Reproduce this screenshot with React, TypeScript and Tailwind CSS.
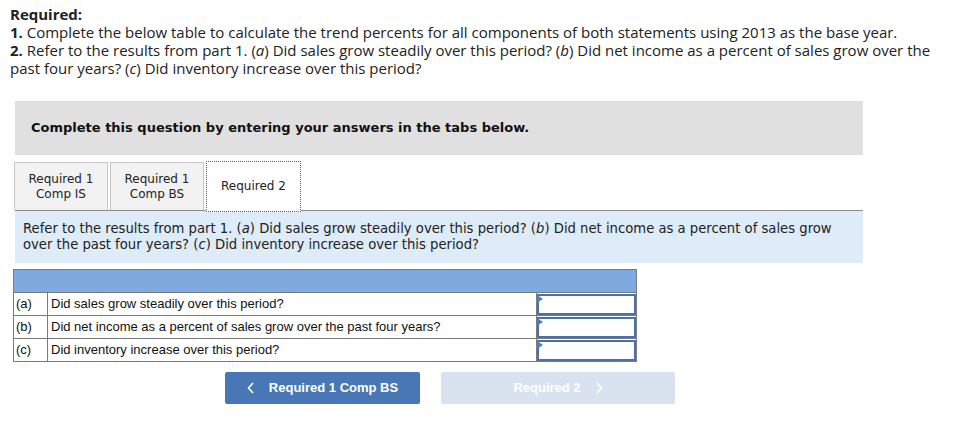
// Required 2 tab — trend percents question (read-only reproduction)

const verdana = { fontFamily: '"DejaVu Sans", Verdana, sans-serif' }
const arial = { fontFamily: '"Liberation Sans", Arial, sans-serif' }

type Row = { key: string; text: string }

const ROWS: Row[] = [
  { key: '(a)', text: 'Did sales grow steadily over this period?' },
  { key: '(b)', text: 'Did net income as a percent of sales grow over the past four years?' },
  { key: '(c)', text: 'Did inventory increase over this period?' },
]

function AnswerCell() {
  return (
    <td className="w-[100px] border border-[#7a7a7a] p-0">
      <div className="relative h-[21px] border-2 border-[#4a70ad] bg-white">
        {/* 下拉提示小三角 */}
        <span className="absolute -left-[2px] -top-[1px] h-0 w-0 border-y-[4px] border-l-[6px] border-y-transparent border-l-[#4a7fc6]" />
      </div>
    </td>
  )
}

function Tab({ lines, active }: { lines: string[]; active?: boolean }) {
  return (
    <div
      className={
        active
          ? 'flex h-[51px] w-[95px] items-center justify-center border border-dotted border-[#2f63b3] bg-white text-[12px] leading-[15px] text-[#222] -mb-[2px]'
          : 'flex h-[48px] w-[94px] items-center justify-center border border-b-0 border-[#c8c8c8] bg-[#f2f2f2] text-[12px] leading-[15px] text-[#222]'
      }
      style={verdana}
    >
      <div className="text-center">
        {lines.map(l => (
          <div key={l}>{l}</div>
        ))}
      </div>
    </div>
  )
}

function Chevron({ dir }: { dir: 'left' | 'right' }) {
  return (
    <svg width="8" height="12" viewBox="0 0 8 12" fill="none" stroke="currentColor" strokeWidth="1.6">
      {dir === 'left' ? <polyline points="6,1 1.5,6 6,11" /> : <polyline points="2,1 6.5,6 2,11" />}
    </svg>
  )
}

export default function App() {
  return (
    <div className="h-[424px] w-[960px] bg-white" style={{ fontFamily: '"Open Sans", Lato, sans-serif' }}>
      {/* ── 题干 ── */}
      <div className="pl-[10px] pr-[20px] pt-[5px] text-[15px] leading-[18px] text-[#222]">
        <div className="font-bold">Required:</div>
        <div>
          <b>1.</b> Complete the below table to calculate the trend percents for all components of both statements using 2013 as the base year.
        </div>
        <div>
          <b>2.</b> Refer to the results from part 1. (<i>a</i>) Did sales grow steadily over this period? (<i>b</i>) Did net income as a percent of sales grow over the past four years? (<i>c</i>) Did inventory increase over this period?
        </div>
      </div>

      {/* ── 灰色提示条 ── */}
      <div
        className="mx-[15px] mt-[24px] flex h-[54px] w-[848px] items-center bg-[#e0e0e0] pl-[16px] text-[13px] font-bold text-[#111]"
        style={verdana}
      >
        Complete this question by entering your answers in the tabs below.
      </div>

      {/* ── 标签页 ── */}
      <div className="ml-[14px] mt-[6px] flex items-end gap-[2px]">
        <Tab lines={['Required 1', 'Comp IS']} />
        <Tab lines={['Required 1', 'Comp BS']} />
        <Tab lines={['Required 2']} active />
      </div>
      <div className="ml-[15px] w-[848px] border-t border-[#8a8a8a]" />

      {/* ── 说明蓝带 ── */}
      <div
        className="ml-[15px] w-[848px] bg-[#deebf8] px-[8px] pt-[10px] pb-[10px] text-[13.2px] leading-[16px] text-[#222]"
        style={verdana}
      >
        Refer to the results from part 1. (<i>a</i>) Did sales grow steadily over this period? (<i>b</i>) Did net income as a percent of sales grow over the past four years? (<i>c</i>) Did inventory increase over this period?
      </div>

      {/* ── 作答表格 ── */}
      <table className="ml-[13px] mt-[6px] w-[624px] border-collapse text-[13px] text-[#111]" style={arial}>
        <tbody>
          <tr>
            <td colSpan={3} className="h-[23px] border border-[#7a7a7a] bg-[#7eaadf]" />
          </tr>
          {ROWS.map(r => (
            <tr key={r.key}>
              <td className="h-[23px] w-[34px] border border-[#7a7a7a] pl-[2px] align-middle">{r.key}</td>
              <td className="border border-[#7a7a7a] pl-[3px] align-middle">{r.text}</td>
              <AnswerCell />
            </tr>
          ))}
        </tbody>
      </table>

      {/* ── 上一步 / 下一步 ── */}
      <div className="ml-[225px] mt-[10px] flex gap-[21px]" style={arial}>
        <button
          type="button"
          className="flex h-[32px] w-[195px] items-center justify-center gap-[14px] rounded-[2px] bg-[#4877b5] text-[13px] font-bold text-white"
        >
          <Chevron dir="left" />
          <span>Required 1 Comp BS</span>
        </button>
        <button
          type="button"
          className="flex h-[32px] w-[234px] items-center justify-center gap-[14px] rounded-[2px] bg-[#d9e3ef] text-[13px] font-bold text-white"
        >
          <span>Required 2</span>
          <Chevron dir="right" />
        </button>
      </div>
    </div>
  )
}
